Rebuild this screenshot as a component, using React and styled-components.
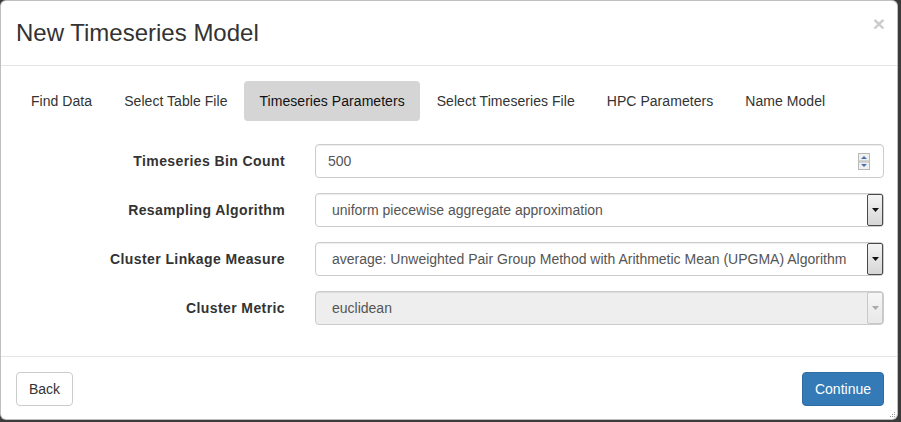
import React from "react";
import styled, { createGlobalStyle } from "styled-components";

// STYLING
const Global = createGlobalStyle`
  html, body {
    margin: 0;
    padding: 0;
    background: #3b3b3b;
    font-family: "Liberation Sans", Arial, sans-serif;
    font-size: 14px;
    color: #333;
  }
`;

const Page = styled.div`
  width: 901px;
  height: 422px;
  overflow: hidden;
`;

const Modal = styled.div`
  position: relative;
  width: 898px;
  height: 420px;
  box-sizing: border-box;
  background: #fff;
  border: 1px solid rgba(0, 0, 0, 0.25);
  border-radius: 6px;
  display: flex;
  flex-direction: column;
`;

const Header = styled.div`
  display: flex;
  align-items: flex-start;
  justify-content: space-between;
  padding: 14px 12px 15px 15px;
  border-bottom: 1px solid #e5e5e5;
`;

const Title = styled.h4`
  margin: 0;
  font-size: 24px;
  font-weight: normal;
  line-height: 35px;
  color: #333;
`;

const Close = styled.button`
  border: 0;
  background: none;
  padding: 0;
  margin-top: -2px;
  font-family: "Liberation Sans", Arial, sans-serif;
  font-size: 21px;
  font-weight: bold;
  line-height: 1;
  color: #000;
  opacity: 0.2;
`;

const Body = styled.div`
  padding: 15px 13px 16px 15px;
`;

const Pills = styled.ul`
  list-style: none;
  display: flex;
  margin: 0 0 23px;
  padding: 0;
`;

const Pill = styled.li`
  margin-left: ${(p) => (p.$first ? "0" : "2px")};
  padding: 10px 15px;
  line-height: 20px;
  letter-spacing: 0.05px;
  border-radius: 4px;
  background: ${(p) => (p.$active ? "#d5d5d5" : "transparent")};
  color: ${(p) => (p.$active ? "#111" : "#333")};
`;

const Row = styled.div`
  display: grid;
  grid-template-columns: 269px 1fr;
  column-gap: 30px;
  align-items: center;
  margin-bottom: 15px;
`;

const Label = styled.label`
  text-align: right;
  font-weight: bold;
  letter-spacing: 0.4px;
  color: #333;
`;

const Field = styled.div`
  display: flex;
  align-items: center;
  height: 34px;
  box-sizing: border-box;
  border: 1px solid #ccc;
  border-radius: 4px;
  background: ${(p) => (p.$disabled ? "#eee" : "#fff")};
  box-shadow: inset 0 1px 1px rgba(0, 0, 0, 0.075);
  padding: ${(p) => (p.$select ? "0 0 0 16px" : "0 13px 0 12px")};
`;

const Value = styled.span`
  flex: 1;
  color: #555;
  white-space: nowrap;
  overflow: hidden;
`;

const ArrowBox = styled.span`
  display: flex;
  align-items: center;
  justify-content: center;
  width: 16px;
  height: 32px;
  box-sizing: border-box;
  border: 1px solid ${(p) => (p.$disabled ? "#c8c8c8" : "#4a4a4a")};
  border-radius: 2px;
  background: ${(p) =>
    p.$disabled
      ? "linear-gradient(#f6f6f6, #e8e8e8)"
      : "linear-gradient(#f4f4f4, #d6d6d6)"};
`;

const Footer = styled.div`
  display: flex;
  justify-content: space-between;
  padding: 15px 13px 13px 15px;
  border-top: 1px solid #e5e5e5;
`;

const Button = styled.button`
  height: 34px;
  padding: 6px 12px;
  font-family: "Liberation Sans", Arial, sans-serif;
  font-size: 14px;
  line-height: 20px;
  border-radius: 4px;
  border: 1px solid ${(p) => (p.$primary ? "#2e6da4" : "#ccc")};
  background: ${(p) => (p.$primary ? "#337ab7" : "#fff")};
  color: ${(p) => (p.$primary ? "#fff" : "#333")};
`;

const Grip = styled.svg`
  position: absolute;
  right: 1px;
  bottom: 1px;
`;

function Arrow({ disabled }) {
  return (
    <ArrowBox $disabled={disabled}>
      <svg width="7" height="4" viewBox="0 0 7 4">
        <path d="M0 0h7L3.5 4z" fill={disabled ? "#aaa" : "#111"} />
      </svg>
    </ArrowBox>
  );
}

function Spinner() {
  return (
    <svg width="12" height="17" viewBox="0 0 12 17">
      <rect x="0.5" y="0.5" width="11" height="7.5" fill="#f0f0f0" stroke="#b8b8b8" />
      <rect x="0.5" y="9" width="11" height="7.5" fill="#f0f0f0" stroke="#b8b8b8" />
      <path d="M3 6h6L6 3z" fill="#4a6fb0" />
      <path d="M3 11h6l-3 3z" fill="#4a6fb0" />
    </svg>
  );
}

const tabs = [
  "Find Data",
  "Select Table File",
  "Timeseries Parameters",
  "Select Timeseries File",
  "HPC Parameters",
  "Name Model",
];

export default function App() {
  return (
    <Page>
      <Global />
      <Modal>
        <Header>
          <Title>New Timeseries Model</Title>
          <Close>×</Close>
        </Header>
        <Body>
          <Pills>
            {tabs.map((t, i) => (
              <Pill key={t} $first={i === 0} $active={i === 2}>
                {t}
              </Pill>
            ))}
          </Pills>
          <Row>
            <Label>Timeseries Bin Count</Label>
            <Field>
              <Value>500</Value>
              <Spinner />
            </Field>
          </Row>
          <Row>
            <Label>Resampling Algorithm</Label>
            <Field $select>
              <Value>uniform piecewise aggregate approximation</Value>
              <Arrow />
            </Field>
          </Row>
          <Row>
            <Label>Cluster Linkage Measure</Label>
            <Field $select>
              <Value>
                average: Unweighted Pair Group Method with Arithmetic Mean
                (UPGMA) Algorithm
              </Value>
              <Arrow />
            </Field>
          </Row>
          <Row>
            <Label>Cluster Metric</Label>
            <Field $select $disabled>
              <Value>euclidean</Value>
              <Arrow disabled />
            </Field>
          </Row>
        </Body>
        <Footer>
          <Button>Back</Button>
          <Button $primary>Continue</Button>
        </Footer>
        <Grip width="6" height="6" viewBox="0 0 6 6">
          <rect x="4" y="0" width="1" height="1" fill="#999" />
          <rect x="2" y="2" width="1" height="1" fill="#999" />
          <rect x="4" y="2" width="1" height="1" fill="#999" />
          <rect x="0" y="4" width="1" height="1" fill="#999" />
          <rect x="2" y="4" width="1" height="1" fill="#999" />
          <rect x="4" y="4" width="1" height="1" fill="#999" />
        </Grip>
      </Modal>
    </Page>
  );
}
